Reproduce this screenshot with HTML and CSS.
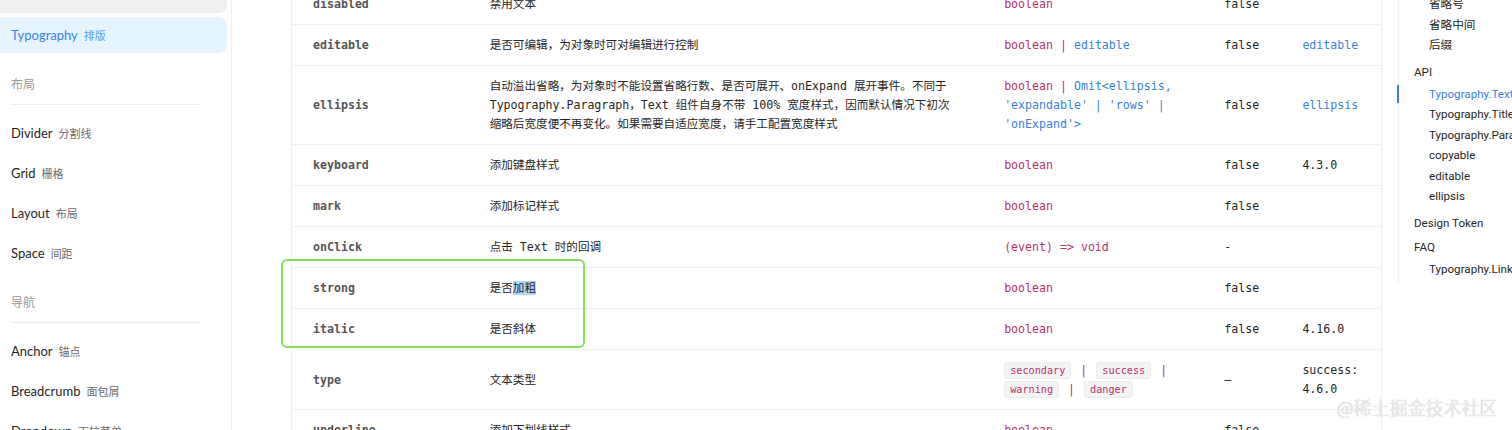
FILE: index.html
```html
<!DOCTYPE html>
<html lang="zh-CN">
<head>
  <meta charset="UTF-8">
  <meta name="viewport" content="width=device-width, initial-scale=1.0">
  <title>Typography 排版</title>
  <link rel="stylesheet" href="styles.css">
</head>
<body>
<div class="page">

  <!-- Left menu -->
  <aside class="sidebar">
    <div class="menu-item hover"></div>
    <div class="menu-item active">Typography<span class="sub">排版</span></div>

    <div class="menu-group">
      <div class="group-title">布局</div>
      <div class="group-line"></div>
    </div>
    <div class="menu-item">Divider<span class="sub">分割线</span></div>
    <div class="menu-item">Grid<span class="sub">栅格</span></div>
    <div class="menu-item">Layout<span class="sub">布局</span></div>
    <div class="menu-item">Space<span class="sub">间距</span></div>

    <div class="menu-group">
      <div class="group-title">导航</div>
      <div class="group-line"></div>
    </div>
    <div class="menu-item">Anchor<span class="sub">锚点</span></div>
    <div class="menu-item">Breadcrumb<span class="sub">面包屑</span></div>
    <div class="menu-item">Dropdown<span class="sub">下拉菜单</span></div>
  </aside>

  <!-- API table -->
  <main class="content">
    <table class="api-table">
      <colgroup>
        <col class="c-name">
        <col class="c-desc">
        <col class="c-type">
        <col class="c-default">
        <col class="c-version">
      </colgroup>
      <tbody>
        <tr>
          <td class="name">disabled</td>
          <td>禁用文本</td>
          <td><span class="t">boolean</span></td>
          <td>false</td>
          <td></td>
        </tr>
        <tr>
          <td class="name">editable</td>
          <td>是否可编辑，为对象时可对编辑进行控制</td>
          <td><span class="t">boolean | </span><span class="link">editable</span></td>
          <td>false</td>
          <td><span class="link">editable</span></td>
        </tr>
        <tr>
          <td class="name">ellipsis</td>
          <td>自动溢出省略，为对象时不能设置省略行数、是否可展开、onExpand 展开事件。不同于<br>Typography.Paragraph，Text 组件自身不带 100% 宽度样式，因而默认情况下初次<br>缩略后宽度便不再变化。如果需要自适应宽度，请手工配置宽度样式</td>
          <td><span class="t">boolean | </span><span class="link">Omit&lt;ellipsis,<br>'expandable' | 'rows' |<br>'onExpand'&gt;</span></td>
          <td>false</td>
          <td><span class="link">ellipsis</span></td>
        </tr>
        <tr>
          <td class="name">keyboard</td>
          <td>添加键盘样式</td>
          <td><span class="t">boolean</span></td>
          <td>false</td>
          <td>4.3.0</td>
        </tr>
        <tr>
          <td class="name">mark</td>
          <td>添加标记样式</td>
          <td><span class="t">boolean</span></td>
          <td>false</td>
          <td></td>
        </tr>
        <tr>
          <td class="name">onClick</td>
          <td>点击 Text 时的回调</td>
          <td><span class="t">(event) =&gt; void</span></td>
          <td>-</td>
          <td></td>
        </tr>
        <tr>
          <td class="name">strong</td>
          <td>是否<span class="selected">加粗</span></td>
          <td><span class="t">boolean</span></td>
          <td>false</td>
          <td></td>
        </tr>
        <tr>
          <td class="name">italic</td>
          <td>是否斜体</td>
          <td><span class="t">boolean</span></td>
          <td>false</td>
          <td>4.16.0</td>
        </tr>
        <tr>
          <td class="name">type</td>
          <td>文本类型</td>
          <td><code class="tag">secondary</code><span class="t pipe">|</span><code class="tag">success</code><span class="t pipe">|</span><br><code class="tag">warning</code><span class="t pipe">|</span><code class="tag">danger</code></td>
          <td>–</td>
          <td>success:<br>4.6.0</td>
        </tr>
        <tr>
          <td class="name">underline</td>
          <td>添加下划线样式</td>
          <td><span class="t">boolean</span></td>
          <td>false</td>
          <td></td>
        </tr>
      </tbody>
    </table>
  </main>

  <!-- Page anchor -->
  <nav class="anchor">
    <div class="anchor-sub">
      <a>省略号</a>
      <a>省略中间</a>
      <a>后缀</a>
    </div>
    <a class="anchor-top">API</a>
    <div class="anchor-sub">
      <a class="current">Typography.Text</a>
      <a>Typography.Title</a>
      <a>Typography.Paragraph</a>
      <a>copyable</a>
      <a>editable</a>
      <a>ellipsis</a>
    </div>
    <a class="anchor-top">Design Token</a>
    <a class="anchor-top">FAQ</a>
    <div class="anchor-sub">
      <a>Typography.Link</a>
    </div>
  </nav>

  <!-- screenshot overlays -->
  <div class="highlight-box"></div>
  <div class="watermark">@稀土掘金技术社区</div>
</div>
</body>
</html>
```

FILE: styles.css
```css
* {
  margin: 0;
  padding: 0;
  box-sizing: border-box;
}
body {
  background-color: #fff;
  overflow: hidden;
  width: 1512px;
  height: 430px;
}
.page {
  position: relative;
  display: flex;
  align-items: flex-start;
  width: 1512px;
  height: 430px;
  overflow: hidden;
}

/* Sidebar */
.sidebar {
  flex: 0 0 232px;
  height: 453px;
  border-right: 1px solid #f0f0f0;
  padding-right: 4px;
  margin-top: -23px;
  font-family: Lato, "Noto Sans CJK SC", sans-serif;
}
.menu-item {
  height: 36px;
  line-height: 36px;
  margin-bottom: 4px;
  padding-left: 11px;
  font-size: 13px;
  color: #1f1f1f;
  border-radius: 0 8px 8px 0;
  white-space: nowrap;
}
.menu-item .sub {
  margin-left: 6px;
  font-size: 11px;
  color: #6b6b6b;
}
.menu-item.hover {
  background-color: #f0f0f0;
}
.menu-item.active {
  background-color: #e6f4ff;
  color: #3b82e8;
}
.menu-item.active .sub {
  color: #5c9cf0;
}
.menu-group {
  padding: 16px 0 0 11px;
  margin-bottom: 10px;
}
.group-title {
  line-height: 24px;
  font-size: 12px;
  color: #9a9a9a;
}
.group-line {
  width: 189px;
  height: 1px;
  background-color: #eeeeee;
  margin-top: 7px;
}

/* Table */
.content {
  flex: 0 0 auto;
  padding-left: 59px;
  margin-top: -16px;
}
.api-table {
  table-layout: fixed;
  border-collapse: collapse;
  width: 1091px;
  border-left: 1px solid #f0f0f0;
  border-right: 1px solid #f0f0f0;
  font-family: "DejaVu Sans Mono", "Noto Sans CJK SC", monospace;
  font-size: 11.6px;
  color: #262626;
}
.c-name { width: 177px; }
.c-desc { width: 514px; }
.c-type { width: 220px; }
.c-default { width: 78px; }
.c-version { width: 100px; }
.api-table td {
  padding: 11px 8px 10px 21px;
  line-height: 19px;
  border-bottom: 1px solid #f0f0f0;
  vertical-align: middle;
  white-space: nowrap;
}
.api-table td.name {
  font-weight: 700;
  color: #555;
}
.api-table .t {
  color: #b8326f;
}
.api-table .link {
  color: #3a7fde;
}
.selected {
  background-color: #b4d5fe;
}
.tag {
  display: inline-block;
  font-family: "DejaVu Sans Mono", monospace;
  font-size: 10.2px;
  line-height: 15px;
  padding: 0 5px;
  color: #b8326f;
  background-color: #f4f4f4;
  border: 1px solid #ececec;
  border-radius: 3px;
  vertical-align: middle;
}
.pipe {
  display: inline-block;
  margin: 0 9px;
}

/* Anchor */
.anchor {
  flex: 0 0 auto;
  margin-left: 16px;
  margin-top: -6px;
  border-left: 1px solid #f0f0f0;
  font-family: Roboto, "Noto Sans CJK SC", sans-serif;
  font-size: 11.6px;
  color: #262626;
  white-space: nowrap;
}
.anchor a {
  display: block;
}
.anchor-top {
  line-height: 24px;
  padding-left: 15px;
}
.anchor-sub {
  padding-bottom: 4px;
}
.anchor-sub a {
  position: relative;
  line-height: 20.5px;
  padding-left: 30px;
}
.anchor-sub a.current {
  color: #3a7fde;
}
.anchor-sub a.current::before {
  content: "";
  position: absolute;
  left: -2px;
  top: 1px;
  width: 2px;
  height: 18px;
  background-color: #3a7fde;
}

/* Overlays from the screenshot */
.highlight-box {
  position: absolute;
  left: 281px;
  top: 259px;
  width: 304px;
  height: 89px;
  border: 2px solid #88dd5a;
  border-radius: 6px;
}
.watermark {
  position: absolute;
  left: 1337px;
  top: 394px;
  font-family: "Noto Sans CJK SC", sans-serif;
  font-size: 18px;
  font-weight: 300;
  color: #f2f2f2;
  text-shadow: 0 0 1px #a0a0a0;
}
```
